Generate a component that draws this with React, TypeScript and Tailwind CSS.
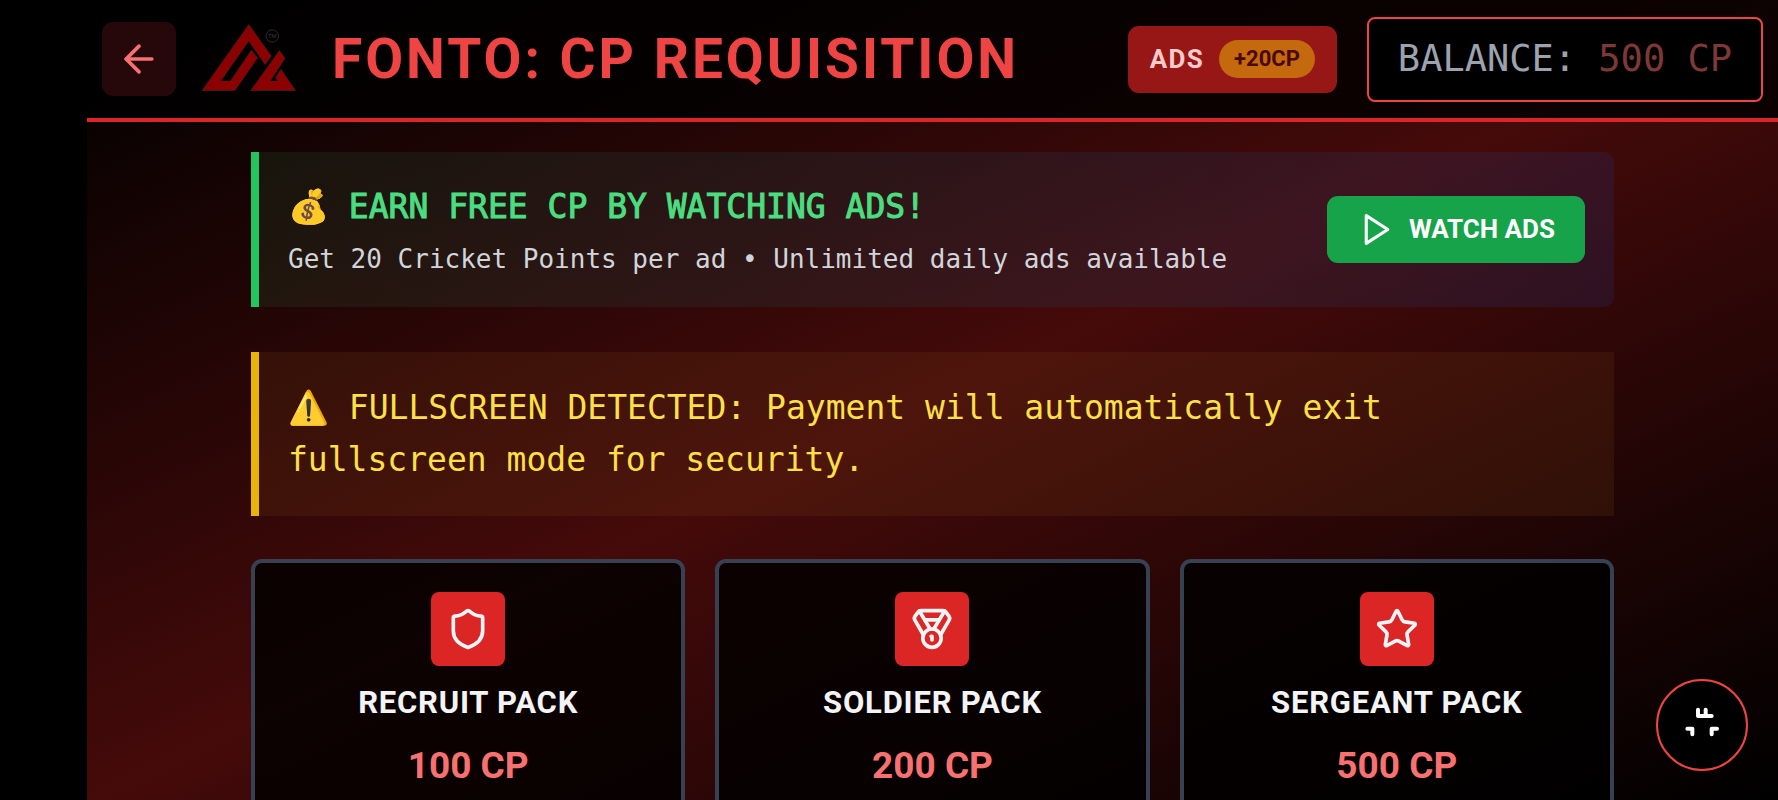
import { ArrowLeft, Medal, Shield, Star } from "lucide-react";
import type { LucideIcon } from "lucide-react";

interface Pack {
    name: string;
    points: number;
    icon: LucideIcon;
}

const packs: Pack[] = [
    { name: "RECRUIT PACK", points: 100, icon: Shield },
    { name: "SOLDIER PACK", points: 200, icon: Medal },
    { name: "SERGEANT PACK", points: 500, icon: Star },
];

function Logo() {
    return (
        <svg viewBox="200 24 98 70" className="w-[98px] h-[70px] shrink-0" role="img" aria-label="Fonto">
            <g fill="#8b0000" stroke="#3a2626" strokeWidth="0.6">
                <path d="M202 90.5 248.8 24.4 271.3 56 265.2 64.7 248.8 41 220.8 81H230.4L251.4 50 257.6 58 235 90.5Z" />
                <path d="M250.7 90.5 279.4 50.5 285.1 58.3 270.2 81H277.5L275.5 77.5 281 69.3 295.5 90.5Z" />
            </g>
            <circle cx="272.3" cy="36" r="6.2" fill="none" stroke="#2b2b2b" strokeWidth="1" />
            <text x="272.3" y="38" textAnchor="middle" fontSize="6" fontFamily="Liberation Sans, sans-serif" fill="#3a3a3a">
                TM
            </text>
        </svg>
    );
}

function Header() {
    return (
        <header className="flex items-center justify-between px-[15px] h-[122px] shrink-0 border-b-4 border-[#dc2626] bg-black/80">
            <div className="flex items-center">
                <button type="button" aria-label="Back" className="p-[15px] rounded-[11px] bg-[#27080a] text-[#f87171]">
                    <ArrowLeft size={44} />
                </button>
                <div className="ml-6">
                    <Logo />
                </div>
                <h1 className="ml-[34px] text-[55px] leading-[64px] font-bold tracking-[3px] text-[#ef4444] whitespace-nowrap">
                    FONTO: CP REQUISITION
                </h1>
            </div>

            <div className="flex items-center gap-[30px]">
                <button type="button" className="flex items-center gap-[15px] h-[67px] px-[22px] rounded-[11px] bg-[#971616]">
                    <span className="text-[26px] leading-[37px] font-bold tracking-wider text-[#fecaca]">ADS</span>
                    <span className="px-[15px] rounded-full bg-[#c4690d] text-[22px] leading-[38px] font-bold text-[#4a0808]">
                        +20CP
                    </span>
                </button>
                <div className="flex items-center h-[85px] px-[29px] rounded-[8px] border-2 border-[#ef4444] bg-black font-['DejaVu_Sans_Mono',monospace] text-[37px] leading-[52px] whitespace-pre">
                    <span className="text-[#9ca3af]">BALANCE: </span>
                    <span className="text-[#7f3838]">500 CP</span>
                </div>
            </div>
        </header>
    );
}

function AdsBanner() {
    return (
        <section className="flex items-center justify-between p-[29px] h-[155px] border-l-8 border-[#22c55e] rounded-r-[11px] bg-[linear-gradient(to_right,rgba(34,83,45,0.22),rgba(30,58,138,0.2))]">
            <div className="font-['DejaVu_Sans_Mono',monospace]">
                <h2 className="text-[33px] leading-[52px] font-normal text-[#4ade80] [-webkit-text-stroke:1px_#4ade80]">
                    💰 EARN FREE CP BY WATCHING ADS!
                </h2>
                <p className="text-[26px] leading-[37px] mt-2 text-[#d1d5db]">
                    Get 20 Cricket Points per ad • Unlimited daily ads available
                </p>
            </div>
            <button
                type="button"
                className="flex items-center gap-[15px] h-[67px] px-[30px] shrink-0 rounded-[11px] bg-[#16a34a] text-[26px] leading-[37px] font-bold text-white"
            >
                <svg
                    viewBox="0 0 24 24"
                    className="size-[37px]"
                    fill="none"
                    stroke="currentColor"
                    strokeWidth="2"
                    strokeLinecap="round"
                    strokeLinejoin="round"
                    aria-hidden="true"
                >
                    <polygon points="6 3 20 12 6 21" />
                </svg>
                WATCH ADS
            </button>
        </section>
    );
}

function PackCard({ pack }: { pack: Pack }) {
    const Icon = pack.icon;

    return (
        <article className="flex flex-col items-center px-[29px] pt-[29px] pb-20 rounded-[11px] border-4 border-[#374151] bg-black/80">
            <div className="p-[15px] rounded-[8px] bg-[#dc2626] text-[#f3f4f6]">
                <Icon size={44} />
            </div>
            <h3 className="mt-[15px] text-[31px] leading-[44px] font-bold tracking-wide text-[#f3f4f6]">{pack.name}</h3>
            <p className="mt-[15px] text-[37px] leading-[52px] font-bold text-[#f87171]">{pack.points} CP</p>
        </article>
    );
}

export default function App() {
    return (
        <div className="h-screen pl-[87px] bg-black font-[Roboto,sans-serif]">
            <div className="h-full flex flex-col bg-[linear-gradient(to_bottom_right,#000,#450a0a,#000)]">
                <Header />

                <main className="flex-1 min-h-0 overflow-y-auto [scrollbar-width:none]">
                    <div className="w-full max-w-[1423px] mx-auto px-[30px] py-[30px]">
                        <AdsBanner />

                        <p className="mt-[45px] px-[29px] py-[30px] border-l-8 border-[#eab308] bg-[#713f12]/20 font-['DejaVu_Sans_Mono',monospace] text-[33px] leading-[52px] text-[#fde047]">
                            ⚠️ FULLSCREEN DETECTED: Payment will automatically exit fullscreen mode for security.
                        </p>

                        <div className="mt-[43px] grid grid-cols-3 gap-[30px]">
                            {packs.map((pack) => (
                                <PackCard key={pack.name} pack={pack} />
                            ))}
                        </div>
                    </div>
                </main>
            </div>

            {/* Bouton plein écran */}
            <button
                type="button"
                aria-label="Exit fullscreen"
                className="fixed bottom-[29px] right-[30px] size-[92px] flex items-center justify-center rounded-full border-2 border-[#ef4444] bg-black text-white"
            >
                <svg
                    viewBox="127 118 120 120"
                    className="size-[40px]"
                    fill="none"
                    stroke="currentColor"
                    strokeWidth="12"
                    strokeLinecap="round"
                    strokeLinejoin="round"
                    aria-hidden="true"
                >
                    <path d="M175 132V151H216M198 132V150" />
                    <path d="M143 189H158V206" />
                    <path d="M232 189H216V206" />
                </svg>
            </button>
        </div>
    );
}
